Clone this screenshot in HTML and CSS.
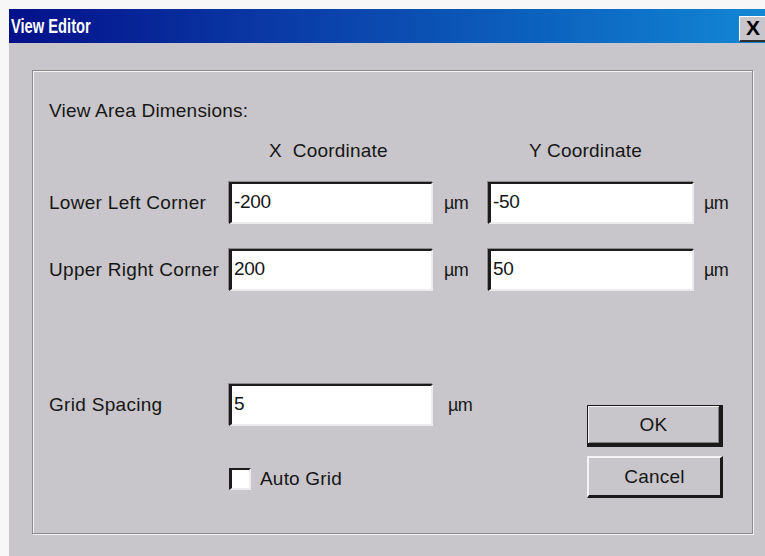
FILE: index.html
```html
<!DOCTYPE html>
<html lang="en">
<head>
<meta charset="utf-8">
<title>View Editor</title>
<link rel="stylesheet" href="styles.css">
</head>
<body>
<div class="window">
  <div class="titlebar">
    <span class="title">View Editor</span>
    <span class="close-btn">X</span>
  </div>
  <div class="client">
    <div class="groupbox">
      <div class="group-caption">View Area Dimensions:</div>

      <div class="cols head-row">
        <div></div>
        <div class="col-head x-head">X&nbsp; Coordinate</div>
        <div></div>
        <div class="col-head y-head">Y Coordinate</div>
      </div>

      <div class="cols dim-row">
        <div class="row-label">Lower Left Corner</div>
        <div class="edit">-200</div>
        <div class="unit">µm</div>
        <div class="edit">-50</div>
        <div class="unit unit-r">µm</div>
      </div>

      <div class="cols dim-row">
        <div class="row-label">Upper Right Corner</div>
        <div class="edit">200</div>
        <div class="unit">µm</div>
        <div class="edit">50</div>
        <div class="unit unit-r">µm</div>
      </div>

      <div class="lower">
        <div class="grid-fields">
          <div class="row-label">Grid Spacing</div>
          <div class="edit">5</div>
          <div class="unit unit-g">µm</div>
          <div></div>
          <label class="check">
            <span class="check-box"></span>
            <span class="check-text">Auto Grid</span>
          </label>
        </div>
        <div class="buttons">
          <div class="btn btn-default">OK</div>
          <div class="btn">Cancel</div>
        </div>
      </div>
    </div>
  </div>
</div>
</body>
</html>
```

FILE: styles.css
```css
html, body {
  margin: 0;
  padding: 0;
  background: #f7f7f8;
  overflow: hidden;
}

body {
  width: 765px;
  height: 556px;
  font-family: "Liberation Sans", Arial, sans-serif;
  font-size: 19px;
  color: #161616;
}

.window {
  margin: 9px 0 0 9px;
  width: 760px;
  height: 547px;
  display: flex;
  flex-direction: column;
}

/* caption bar */
.titlebar {
  height: 34px;
  flex: none;
  background: linear-gradient(to right, #04108a 0%, #0a3aa6 35%, #0c62bf 70%, #1288d4 100%);
  display: flex;
  align-items: center;
  justify-content: space-between;
}

.title {
  color: #ffffff;
  font-weight: bold;
  font-size: 21px;
  margin-left: 2px;
  transform: scaleX(0.7);
  transform-origin: left center;
}

.close-btn {
  width: 30px;
  height: 26px;
  margin-top: 5px;
  background: #c8c6ca;
  border-top: 1px solid #ffffff;
  border-left: 1px solid #ffffff;
  border-bottom: 2px solid #303030;
  box-sizing: border-box;
  padding-left: 6px;
  font-weight: bold;
  font-size: 21px;
  line-height: 22px;
  color: #000;
}

/* dialog client area */
.client {
  flex: 1;
  background: #c8c6ca;
  padding: 27px 0 0 23px;
}

/* etched group frame */
.groupbox {
  width: 721px;
  height: 464px;
  box-sizing: border-box;
  border: 1px solid #8a898c;
  box-shadow: 1px 1px 0 #f4f4f4, inset 1px 1px 0 #f4f4f4;
  padding: 29px 0 0 16px;
}

.group-caption {
  line-height: 22px;
  letter-spacing: 0.2px;
}

/* shared column layout for the coordinate rows */
.cols {
  display: grid;
  grid-template-columns: 180px 204px 55px 206px auto;
  align-items: center;
}

.head-row {
  height: 22px;
  margin-top: 18px;
}

.dim-row {
  height: 42px;
  margin-top: 20px;
}

.dim-row + .dim-row {
  margin-top: 25px;
}

.col-head {
  line-height: 22px;
  white-space: nowrap;
  letter-spacing: 0.2px;
}

.x-head {
  padding-left: 40px;
}

.y-head {
  padding-left: 41px;
}

.row-label {
  white-space: nowrap;
  letter-spacing: 0.3px;
}

/* sunken edit field */
.edit {
  height: 42px;
  box-sizing: border-box;
  background: #ffffff;
  border-top: 2px solid #1c1c1c;
  border-left: 3px solid #1c1c1c;
  border-right: 2px solid #ecebed;
  border-bottom: 2px solid #ecebed;
  box-shadow: -1px -1px 0 #8c8b8e;
  padding: 7px 0 0 2px;
  line-height: 22px;
  letter-spacing: -0.3px;
}

.unit {
  padding-left: 11px;
  font-size: 18px;
  letter-spacing: -0.5px;
}

.unit-r {
  padding-left: 10px;
}

/* bottom part: grid spacing on the left, buttons on the right */
.lower {
  display: flex;
  margin-top: 93px;
}

.grid-fields {
  display: grid;
  grid-template-columns: 180px 204px 80px;
  grid-template-rows: 42px 22px;
  row-gap: 42px;
  align-items: center;
}

.unit-g {
  padding-left: 15px;
}

.check {
  display: flex;
  align-items: center;
  grid-column: 2 / span 2;
}

.check-box {
  width: 22px;
  height: 22px;
  box-sizing: border-box;
  background: #ffffff;
  border-top: 2px solid #1c1c1c;
  border-left: 3px solid #1c1c1c;
  border-right: 2px solid #ecebed;
  border-bottom: 2px solid #ecebed;
}

.check-text {
  margin-left: 9px;
  letter-spacing: 0.2px;
}

.buttons {
  margin-top: 21px;
  margin-left: 74px;
  display: flex;
  flex-direction: column;
  gap: 9px;
}

.btn {
  width: 136px;
  height: 42px;
  box-sizing: border-box;
  background: #c8c6ca;
  border-top: 2px solid #f4f4f4;
  border-left: 2px solid #f4f4f4;
  border-right: 3px solid #1a1a1a;
  border-bottom: 3px solid #1a1a1a;
  display: flex;
  align-items: center;
  justify-content: center;
  letter-spacing: 0.2px;
  padding-top: 1px;
}

/* default push button gets an extra dark frame */
.btn-default {
  border: 1px solid #1a1a1a;
  border-right-width: 4px;
  border-bottom-width: 4px;
  box-shadow: inset 1px 1px 0 #f4f4f4, inset -1px -1px 0 #808080;
  padding-top: 0;
}
```
